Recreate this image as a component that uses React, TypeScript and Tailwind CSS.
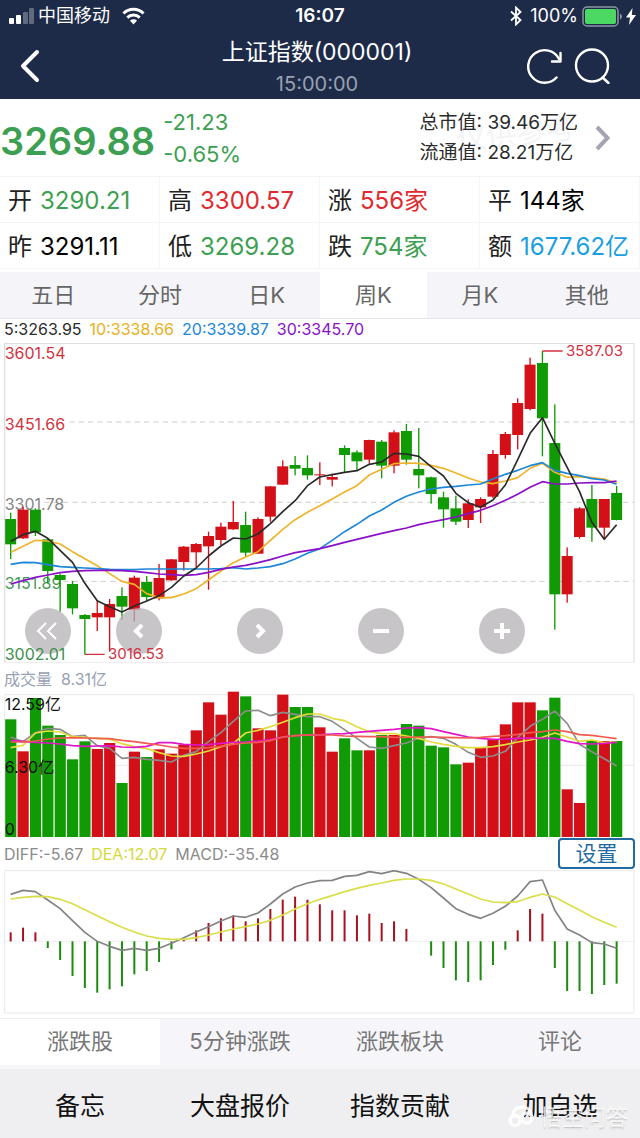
import React, { useState } from "react";

const RED = "#d30f18";
const GREEN = "#109a04";

// chart space is 1920 units wide, one slot per week
const STEP = 37.1;
const centerX = (i: number) => 32 + STEP * i;

type Candle = {
  up: boolean;
  high: number;
  top: number;
  bottom: number;
  low: number;
  volume: number;
  macd: number;
};

const rows: [string, number, number, number, number, number, number][] = [
  ["g", 593, 612, 688, 732, 165, 276],
  ["r", 575, 584, 670, 672, 261, 262],
  ["g", 580, 584, 652, 663, 101, 276],
  ["g", 670, 673, 768, 805, 184, 323],
  ["g", 776, 780, 795, 890, 212, 359],
  ["g", 798, 807, 880, 898, 285, 407],
  ["g", 897, 900, 912, 1018, 231, 443],
  ["r", 856, 894, 907, 948, 254, 457],
  ["r", 852, 867, 907, 1010, 236, 447],
  ["g", 817, 843, 875, 915, 356, 438],
  ["r", 782, 788, 884, 920, 262, 402],
  ["g", 783, 801, 846, 857, 278, 392],
  ["r", 747, 789, 850, 856, 255, 365],
  ["r", 732, 733, 796, 797, 268, 327],
  ["r", 693, 695, 741, 767, 241, 297],
  ["r", 684, 687, 712, 756, 198, 270],
  ["r", 650, 663, 694, 824, 114, 248],
  ["r", 623, 635, 675, 690, 151, 234],
  ["r", 558, 621, 643, 645, 82, 225],
  ["g", 590, 630, 713, 725, 96, 243],
  ["r", 607, 612, 716, 717, 192, 234],
  ["r", 513, 514, 605, 620, 198, 206],
  ["r", 436, 454, 509, 510, 91, 178],
  ["g", 423, 450, 461, 481, 128, 169],
  ["g", 421, 459, 481, 494, 128, 178],
  ["r", 442, 478, 481, 510, 189, 192],
  ["r", 476, 486, 494, 514, 262, 210],
  ["g", 391, 399, 420, 471, 222, 210],
  ["g", 406, 412, 439, 468, 258, 225],
  ["r", 374, 375, 434, 446, 258, 220],
  ["g", 375, 380, 452, 490, 212, 248],
  ["r", 346, 352, 452, 475, 212, 243],
  ["g", 327, 348, 434, 449, 179, 266],
  ["g", 339, 462, 481, 520, 184, 303],
  ["g", 485, 487, 537, 566, 244, 346],
  ["g", 530, 547, 583, 638, 249, 383],
  ["g", 542, 580, 620, 630, 300, 420],
  ["r", 553, 565, 615, 639, 295, 425],
  ["r", 547, 552, 577, 624, 250, 420],
  ["r", 405, 417, 545, 550, 227, 374],
  ["r", 351, 357, 420, 431, 180, 328],
  ["r", 250, 264, 360, 403, 114, 270],
  ["r", 128, 149, 282, 286, 114, 206],
  ["g", 108, 144, 310, 424, 138, 220],
  ["g", 268, 384, 838, 944, 100, 383],
  ["r", 697, 723, 838, 863, 375, 452],
  ["r", 576, 580, 666, 671, 416, 452],
  ["g", 510, 552, 638, 680, 230, 461],
  ["r", 552, 552, 638, 672, 230, 434],
  ["g", 513, 534, 615, 616, 230, 430],
];

const candles: Candle[] = rows.map(
  ([dir, high, top, bottom, low, volume, macd]) => ({
    up: dir === "r",
    high,
    top,
    bottom,
    low,
    volume,
    macd,
  })
);

const ma5 = [
  679, 659, 649, 670, 706, 742, 805, 857, 875, 891, 873, 858, 842, 817, 783,
  759, 723, 693, 669, 672, 657, 626, 590, 557, 512, 486, 479, 472, 467, 448,
  441, 415, 417, 424, 455, 483, 535, 563, 577, 555, 510, 434, 355, 308, 385,
  457, 530, 622, 673, 629,
];
const ma10 = [
  712, 694, 676, 678, 687, 710, 731, 752, 776, 799, 808, 836, 848, 848, 837,
  821, 795, 768, 743, 726, 710, 676, 643, 614, 592, 572, 552, 531, 512, 480,
  463, 446, 444, 445, 451, 460, 474, 489, 501, 506, 498, 488, 460, 445, 472,
  487, 485, 488, 492, 504,
];
const ma20 = [
  748, 742, 743, 749, 755, 757, 759, 761, 763, 764, 764, 762, 762, 762, 762,
  762, 762, 761, 758, 762, 759, 755, 746, 732, 715, 701, 676, 650, 628, 603,
  585, 562, 544, 531, 522, 517, 514, 510, 507, 492, 478, 466, 452, 443, 466,
  475, 482, 491, 495, 508,
];
const ma30 = [
  807, 797, 787, 780, 773, 769, 767, 766, 766, 767, 769, 773, 777, 779, 781,
  779, 772, 763, 756, 751, 743, 734, 723, 713, 707, 701, 692, 682, 673, 664,
  655, 647, 639, 629, 621, 614, 606, 596, 586, 572, 556, 538, 517, 500, 507,
  507, 504, 503, 503, 498,
];

const volGray = [
  218, 232, 205, 192, 195, 217, 213, 244, 252, 282, 279, 285, 288, 293, 273,
  262, 232, 205, 171, 140, 138, 154, 144, 150, 157, 157, 171, 196, 222, 248,
  252, 244, 236, 222, 217, 222, 240, 264, 279, 275, 261, 220, 186, 165, 140,
  177, 240, 262, 283, 305,
];
const volYellow = [
  250, 243, 206, 200, 203, 217, 219, 222, 225, 238, 247, 253, 265, 275, 276,
  269, 260, 247, 237, 206, 198, 187, 174, 160, 149, 149, 162, 169, 187, 202,
  208, 208, 215, 222, 233, 240, 246, 250, 250, 247, 241, 233, 227, 219, 206,
  218, 231, 227, 235, 233,
];
const volMagenta = [
  228, 231, 234, 236, 239, 244, 246, 245, 244, 248, 249, 246, 235, 235, 240,
  242, 241, 237, 234, 233, 230, 226, 218, 214, 212, 211, 209, 208, 204, 201,
  198, 195, 191, 190, 193, 202, 210, 218, 222, 225, 224, 222, 221, 222, 222,
  231, 238, 239, 237, 234,
];
const volSalmon = [
  233, 233, 230, 224, 221, 220, 221, 222, 223, 228, 232, 237, 242, 248, 252,
  252, 250, 246, 240, 236, 234, 229, 218, 214, 212, 212, 212, 215, 216, 217,
  217, 219, 219, 218, 218, 219, 220, 221, 219, 216, 214, 210, 205, 202, 197,
  202, 211, 213, 218, 223,
];

const diff = [
  162, 150, 154, 179, 205, 241, 276, 303, 318, 330, 324, 330, 324, 309, 292,
  275, 259, 242, 227, 231, 218, 191, 161, 140, 128, 121, 120, 108, 105, 94,
  100, 91, 99, 117, 142, 173, 205, 222, 234, 219, 198, 167, 124, 119, 210, 266,
  284, 307, 311, 324,
];
const dea = [
  176, 171, 168, 169, 177, 190, 208, 226, 244, 261, 275, 287, 294, 297, 297,
  292, 284, 275, 266, 259, 251, 240, 224, 206, 190, 177, 166, 154, 144, 135,
  128, 120, 116, 116, 120, 131, 146, 161, 176, 185, 187, 184, 171, 161, 170,
  190, 209, 229, 246, 261,
];

const Line = ({ data, color }: { data: number[]; color: string }) => (
  <polyline
    points={data.map((y, i) => `${centerX(i)},${y}`).join(" ")}
    fill="none"
    stroke={color}
    strokeWidth={5}
    strokeLinejoin="round"
  />
);

const StatusBar = () => (
  <div className="grid h-8 grid-cols-3 items-center px-2 text-lg text-white">
    <div className="flex items-center gap-1">
      <svg width="26" height="18" viewBox="0 0 26 18" fill="#fff">
        <rect x="1" y="11" width="5" height="6" rx="1" />
        <rect x="8" y="8" width="5" height="9" rx="1" />
        <rect x="15" y="5" width="5" height="12" rx="1" opacity=".3" />
        <rect x="21" y="1" width="5" height="16" rx="1" opacity=".3" />
      </svg>
      <span>中国移动</span>
      <svg
        className="ml-2"
        width="23"
        height="18"
        viewBox="0 0 23 18"
        fill="none"
        stroke="#fff"
        strokeWidth="3"
      >
        <path d="M1.5 6.5a14 14 0 0 1 20 0" />
        <path d="M5.3 10.6a8.8 8.8 0 0 1 12.4 0" />
        <path d="M11.5 17.5 8 13.8a5 5 0 0 1 7 0z" fill="#fff" stroke="none" />
      </svg>
    </div>
    <div className="text-center text-[19px] font-semibold">16:07</div>
    <div className="flex items-center justify-end gap-1">
      <svg
        className="mr-1"
        width="12"
        height="20"
        viewBox="0 0 12 20"
        fill="none"
        stroke="#fff"
        strokeWidth="1.8"
      >
        <path d="M1 5.5 10.5 14 6 18.5V1.5L10.5 6 1 14.5" />
      </svg>
      <span>100%</span>
      <svg width="40" height="21" viewBox="0 0 40 21" fill="none">
        <rect
          x="1"
          y="1"
          width="35"
          height="19"
          rx="4"
          stroke="#8e95a5"
          strokeWidth="1.5"
        />
        <rect x="3" y="3" width="31" height="15" rx="2" fill="#4bd964" />
        <path d="M38 7.5q2 1 2 3t-2 3z" fill="#8e95a5" />
      </svg>
      <svg
        className="-mr-1"
        width="10"
        height="17"
        viewBox="0 0 10 17"
        fill="#fff"
      >
        <path d="M6.5 0 0 9.5h4L3 17 10 7H5.8z" />
      </svg>
    </div>
  </div>
);

const Header = () => (
  <header className="bg-[#1d2b49] text-white">
    <StatusBar />
    <div className="grid h-[67px] grid-cols-[1fr_auto_1fr] items-center pr-[30px] pl-5">
      <button type="button" aria-label="返回" className="justify-self-start">
        <svg
          width="20"
          height="34"
          viewBox="0 0 20 34"
          fill="none"
          stroke="#fff"
          strokeWidth="4"
          strokeLinecap="round"
          strokeLinejoin="round"
        >
          <path d="M17 3 3 17l14 14" />
        </svg>
      </button>
      <div className="pl-1 text-center">
        <h1 className="text-[23px] leading-9">上证指数(000001)</h1>
        <p className="text-[20px] leading-7 text-[#99a1b1]">15:00:00</p>
      </div>
      <div className="flex gap-3 justify-self-end">
        <button type="button" aria-label="刷新">
          <svg
            width="36"
            height="36"
            viewBox="0 0 36 36"
            fill="none"
            stroke="#fff"
            strokeWidth="2.4"
            strokeLinecap="round"
            strokeLinejoin="round"
          >
            <path d="M30.5 29.5A16.3 16.3 0 1 1 33 11" />
            <path d="M34.5 5v8.5H26" />
          </svg>
        </button>
        <button type="button" aria-label="搜索">
          <svg
            width="36"
            height="36"
            viewBox="0 0 36 36"
            fill="none"
            stroke="#fff"
            strokeWidth="2.4"
            strokeLinecap="round"
          >
            <circle cx="18" cy="17.5" r="16" />
            <path d="m28.5 29.5 6 5.5" />
          </svg>
        </button>
      </div>
    </div>
  </header>
);

const Quote = () => (
  <section className="relative flex h-[78px] items-center border-b border-[#f3f3f5] pr-7">
    <span className="pointer-events-none absolute top-4 right-16 -rotate-6 text-3xl text-gray-100">
      仅供参考
    </span>
    <strong className="pt-2 text-[38px] font-semibold text-[#3d9f52]">
      3269.88
    </strong>
    <div className="ml-2 text-[22px] leading-8 text-[#3d9f52]">
      <p>-21.23</p>
      <p>-0.65%</p>
    </div>
    <div className="relative ml-auto text-[19px] leading-[30px] text-[#2b2b2b]">
      <p>总市值: 39.46万亿</p>
      <p>流通值: 28.21万亿</p>
    </div>
    <button type="button" aria-label="详情" className="ml-4">
      <svg
        width="18"
        height="26"
        viewBox="0 0 18 26"
        fill="none"
        stroke="#a5a4b0"
        strokeWidth="4"
      >
        <path d="m3 2 10.5 11L3 24" />
      </svg>
    </button>
  </section>
);

const stats = [
  { label: "开", value: "3290.21", color: "text-[#3d9f52]" },
  { label: "高", value: "3300.57", color: "text-[#e02a2f]" },
  { label: "涨", value: "556家", color: "text-[#e02a2f]" },
  { label: "平", value: "144家", color: "text-black" },
  { label: "昨", value: "3291.11", color: "text-black" },
  { label: "低", value: "3269.28", color: "text-[#3d9f52]" },
  { label: "跌", value: "754家", color: "text-[#3d9f52]" },
  { label: "额", value: "1677.62亿", color: "text-[#1c9fe0]" },
];

const Stats = () => (
  <dl className="mb-[3px] grid grid-cols-4">
    {stats.map((s) => (
      <div
        key={s.label}
        className="flex h-[46px] items-center gap-2 border-r border-b border-[#f5f5f7] pt-[3px] pl-2 text-2xl whitespace-nowrap"
      >
        <dt className="text-[#222]">{s.label}</dt>
        <dd className={s.color}>{s.value}</dd>
      </div>
    ))}
  </dl>
);

const periods = ["五日", "分时", "日K", "周K", "月K", "其他"];

const PeriodTabs = () => {
  const [active, setActive] = useState("周K");

  return (
    <nav className="grid grid-cols-6 border-b border-[#e6e6ea] bg-[#f5f5f9]">
      {periods.map((p) => (
        <button
          key={p}
          type="button"
          onClick={() => setActive(p)}
          className={`h-[46px] text-[22px] text-[#666] ${
            active === p ? "bg-white" : ""
          }`}
        >
          {p}
        </button>
      ))}
    </nav>
  );
};

const chartButtons = [
  { label: "最前", path: "m15 9-8 8 8 8M25 9l-8 8 8 8", width: 2 },
  { label: "向前", path: "m20 11-6 6 6 6", width: 4 },
  { label: "向后", path: "m14 11 6 6-6 6", width: 4 },
  { label: "缩小", path: "M9 17h16", width: 4 },
  { label: "放大", path: "M9 17h16M17 9v16", width: 4 },
];

const ChartButton = ({ label, path, width }: (typeof chartButtons)[number]) => (
  <button
    type="button"
    aria-label={label}
    className="flex size-[46px] items-center justify-center rounded-full bg-[#b5b2b5]/75"
  >
    <svg
      width="34"
      height="34"
      viewBox="0 0 34 34"
      fill="none"
      stroke="#fff"
      strokeWidth={width}
    >
      <path d={path} />
    </svg>
  </button>
);

const PriceChart = () => (
  <section>
    <div className="flex h-6 items-center gap-2 pb-1 pl-1 text-base">
      <span className="text-[#2b2b2b]">5:3263.95</span>
      <span className="text-[#e8b020]">10:3338.66</span>
      <span className="text-[#1c86d8]">20:3339.87</span>
      <span className="text-[#8a10c8]">30:3345.70</span>
    </div>
    <div className="relative">
      <svg viewBox="0 84 1920 960" className="block w-full">
        <path
          d="M14 1043V85H1902V1043"
          fill="none"
          stroke="#d9d9dd"
          strokeWidth="3"
        />
        <path d="M14 1042H1902" stroke="#ececef" strokeWidth="3" />
        <path
          d="M208 321H1902M133 562H1902M190 799H1902"
          stroke="#cfcfcf"
          strokeWidth="3"
          strokeDasharray="16 12"
        />
        <g fontSize="48">
          <text x="14" y="132" fill="#cf3340">
            3601.54
          </text>
          <text x="14" y="345" fill="#cf3340">
            3451.66
          </text>
          <text x="14" y="585" fill="#858585">
            3301.78
          </text>
          <text x="14" y="821" fill="#4a9a58">
            3151.89
          </text>
        </g>
        {candles.map((c, i) => (
          <g key={i} fill={c.up ? RED : GREEN}>
            <rect
              x={centerX(i) - 2}
              y={c.high}
              width={4}
              height={c.low - c.high}
            />
            <rect
              x={centerX(i) - 16.5}
              y={c.top}
              width={33}
              height={c.bottom - c.top}
            />
          </g>
        ))}
        <Line data={ma10} color="#efb32a" />
        <Line data={ma20} color="#1c86d8" />
        <Line data={ma30} color="#8a10c8" />
        <Line data={ma5} color="#2a2a2a" />
      </svg>
      <div className="absolute inset-x-0 bottom-[9px] flex gap-[75px] pl-[25px]">
        <div className="flex gap-[45px]">
          {chartButtons.slice(0, 2).map((b) => (
            <ChartButton key={b.label} {...b} />
          ))}
        </div>
        {chartButtons.slice(2).map((b) => (
          <ChartButton key={b.label} {...b} />
        ))}
      </div>
      {/* low and high marks stay readable above the round buttons */}
      <svg
        viewBox="0 84 1920 960"
        className="pointer-events-none absolute inset-0 w-full"
      >
        <path
          d="M254 1018H314M1627 108H1688"
          stroke="#cf3340"
          strokeWidth="4"
        />
        <text x="14" y="1035" fontSize="48" fill="#3d8f4c">
          3002.01
        </text>
        <g fontSize="45" fill="#cf3340">
          <text x="324" y="1032">
            3016.53
          </text>
          <text x="1698" y="122">
            3587.03
          </text>
        </g>
      </svg>
    </div>
  </section>
);

const VolumeChart = () => (
  <section>
    <h2 className="flex h-8 items-center pl-1 text-base text-[#98a1b3]">
      成交量&nbsp; 8.31亿
    </h2>
    <svg viewBox="0 80 1920 440" className="-mt-1 block w-full">
      <path
        d="M14 518V91H1902V518M14 303H1902"
        fill="none"
        stroke="#e8e8eb"
        strokeWidth="3"
      />
      {candles.map((c, i) => (
        <rect
          key={i}
          x={centerX(i) - 16.5}
          y={c.volume}
          width={33.5}
          height={518 - c.volume}
          fill={c.up ? RED : GREEN}
        />
      ))}
      <Line data={volGray} color="#8c8c8c" />
      <Line data={volYellow} color="#e2dc3c" />
      <Line data={volMagenta} color="#e016c8" />
      <Line data={volSalmon} color="#f05a50" />
      <g fontSize="48" fill="#111">
        <text x="14" y="136">
          12.59亿
        </text>
        <text x="14" y="326">
          6.30亿
        </text>
        <text x="14" y="512">
          0
        </text>
      </g>
    </svg>
  </section>
);

const MacdChart = () => (
  <section className="border-b border-[#ececef]">
    <div className="flex h-8 items-center gap-2 pr-[5px] pl-1 text-base text-[#8a8a8a]">
      <span>DIFF:-5.67</span>
      <span className="text-[#d6d83a]">DEA:12.07</span>
      <span>MACD:-35.48</span>
      <button
        type="button"
        className="ml-auto h-[31px] w-[77px] rounded-sm border-2 border-[#1f6aa0] bg-white text-[21px] leading-none text-[#1f6aa0]"
      >
        设置
      </button>
    </div>
    <svg viewBox="0 89 1920 444" className="block w-full">
      <path
        d="M14 91H1902V518H14Z"
        fill="none"
        stroke="#e8e8eb"
        strokeWidth="3"
      />
      <path
        d="M14 303H1902"
        stroke="#dcdcdc"
        strokeWidth="2"
        strokeDasharray="6 4"
      />
      {candles.map((c, i) => (
        <rect
          key={i}
          x={centerX(i) - 3}
          y={Math.min(c.macd, 303)}
          width={6}
          height={Math.abs(c.macd - 303)}
          fill={c.macd < 303 ? "#a8121f" : "#1d8a12"}
        />
      ))}
      <Line data={diff} color="#838383" />
      <Line data={dea} color="#dade48" />
    </svg>
  </section>
);

const newsTabs = ["涨跌股", "5分钟涨跌", "涨跌板块", "评论"];

const NewsTabs = () => {
  const [active, setActive] = useState("涨跌股");

  return (
    <nav className="grid grid-cols-4 bg-[#f6f6fa] pb-1">
      {newsTabs.map((t) => (
        <button
          key={t}
          type="button"
          onClick={() => setActive(t)}
          className={`h-[46px] text-[22px] text-[#777] ${
            active === t ? "bg-white" : ""
          }`}
        >
          {t}
        </button>
      ))}
    </nav>
  );
};

const Footer = () => (
  <footer className="relative grid grid-cols-4 bg-[#efeff1]">
    {["备忘", "大盘报价", "指数贡献", "加自选"].map((item) => (
      <button
        key={item}
        type="button"
        className="h-[69px] pt-2 text-[25px] text-[#111]"
      >
        {item}
      </button>
    ))}
    <div className="pointer-events-none absolute right-3 bottom-1 flex items-center gap-1 text-[22px] text-white/80 text-shadow-sm">
      <svg
        width="28"
        height="24"
        viewBox="0 0 28 24"
        fill="none"
        stroke="#fff"
        strokeOpacity=".85"
        strokeWidth="3.5"
        strokeLinecap="round"
      >
        <path d="M5 11C5 5 9 2 14 2s9 3 9 8" />
        <path d="M12 16a5 5 0 1 1-3-5c3 1 5 7 10 7a5 5 0 1 0-5-5" />
      </svg>
      <span>悟空问答</span>
    </div>
  </footer>
);

const App = () => {
  return (
    <div className="min-h-screen bg-white font-['Inter','Noto_Sans_CJK_SC',sans-serif]">
      <Header />
      <main>
        <Quote />
        <Stats />
        <PeriodTabs />
        <PriceChart />
        <VolumeChart />
        <MacdChart />
        <NewsTabs />
      </main>
      <Footer />
    </div>
  );
};

export default App;
